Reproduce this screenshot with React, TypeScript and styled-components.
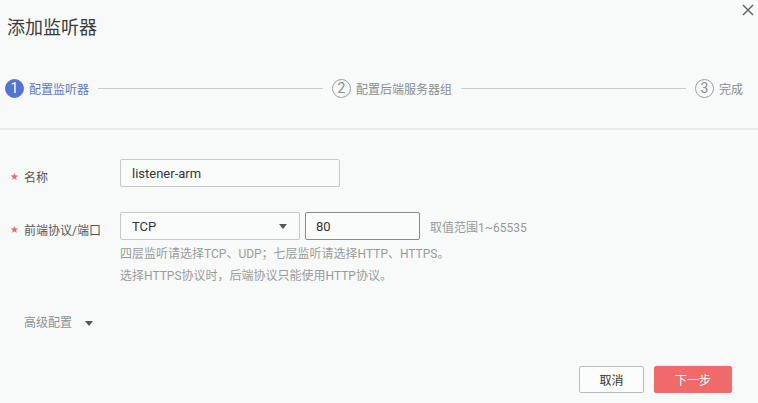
import * as React from 'react'
import styled, { createGlobalStyle } from 'styled-components'

const Global = createGlobalStyle`
  html, body {
    margin: 0;
    padding: 0;
    background: #f7faf8;
  }
  * {
    box-sizing: border-box;
  }
`

const Dialog = styled.div`
  position: relative;
  display: flex;
  flex-direction: column;
  width: 758px;
  height: 403px;
  background: #f7faf8;
  font-family: Roboto, "Noto Sans CJK SC", sans-serif;
  color: #333;
  overflow: hidden;
`

const Close = styled.button`
  position: absolute;
  top: 3px;
  right: 3px;
  width: 14px;
  height: 14px;
  padding: 0;
  border: 0;
  background: none;
  cursor: pointer;
`

const Header = styled.div`
  height: 130px;
  padding-top: 16px;
  border-bottom: 2px solid #e8ecea;
`

const Title = styled.h1`
  margin: 0 0 0 7px;
  font-size: 18px;
  line-height: 24px;
  font-weight: 400;
  color: #3a3a3a;
`

const Steps = styled.div`
  display: flex;
  align-items: center;
  height: 20px;
  margin-top: 38px;
  padding: 0 15px 0 5px;
`

const Step = styled.div`
  display: flex;
  align-items: center;
  gap: 5px;
  flex: none;
`

const StepNum = styled.span<{ $active?: boolean }>`
  display: flex;
  align-items: center;
  justify-content: center;
  width: 19px;
  height: 19px;
  border-radius: 50%;
  font-size: 14px;
  line-height: 1;
  background: ${p => (p.$active ? '#5273d3' : 'transparent')};
  border: 1px solid ${p => (p.$active ? '#5273d3' : '#9ea1a4')};
  color: ${p => (p.$active ? '#fff' : '#8a8d90')};
`

const StepLabel = styled.span<{ $active?: boolean }>`
  font-size: 12px;
  color: ${p => (p.$active ? '#5a78c9' : '#8a8d90')};
`

const StepLine = styled.div`
  flex: 1;
  height: 1px;
  margin: 0 9px;
  background: #c9cccd;
`

const Form = styled.div`
  padding: 29px 0 0 10px;
`

const Row = styled.div<{ $gap?: number }>`
  display: flex;
  align-items: center;
  margin-top: ${p => p.$gap || 0}px;
`

const Label = styled.label`
  display: flex;
  align-items: center;
  width: 110px;
  padding-top: 6px;
  font-size: 12px;
  color: #555;
`

const Star = styled.span`
  color: #e56b6b;
  font-family: "DejaVu Sans", sans-serif;
  font-size: 10px;
  width: 14px;
`

const Field = styled.div<{ $w: number; $dark?: boolean }>`
  display: flex;
  align-items: center;
  justify-content: space-between;
  width: ${p => p.$w}px;
  height: 28px;
  padding: 0 12px 0 11px;
  border: 1px solid ${p => (p.$dark ? '#868b90' : '#c5c9cc')};
  border-radius: 2px;
  background: #fafcfb;
  font-size: 13px;
  color: #333;
`

const PortField = styled(Field)`
  margin-left: 5px;
  padding-left: 10px;
`

const Caret = styled.span`
  width: 0;
  height: 0;
  border-left: 4px solid transparent;
  border-right: 4px solid transparent;
  border-top: 5px solid #555;
`

const Hint = styled.span`
  margin-left: 10px;
  font-size: 12px;
  color: #999;
`

const Help = styled.div`
  margin: 3px 0 0 110px;
  font-size: 12px;
  line-height: 22px;
  color: #9a9a9a;
`

const Advanced = styled.div`
  display: flex;
  align-items: center;
  gap: 13px;
  margin: 26px 0 0 14px;
  font-size: 12px;
  line-height: 20px;
  color: #8e9194;
`

const Footer = styled.div`
  display: flex;
  justify-content: flex-end;
  gap: 10px;
  margin-top: auto;
  padding: 0 26px 10px 0;
`

const Button = styled.button<{ $primary?: boolean }>`
  height: 27px;
  width: ${p => (p.$primary ? 78 : 65)}px;
  border-radius: 2px;
  font-family: inherit;
  font-size: 12px;
  border: 1px solid ${p => (p.$primary ? '#f06a6a' : '#b7bcc0')};
  background: ${p => (p.$primary ? '#f06a6a' : '#fbfcfc')};
  color: ${p => (p.$primary ? '#fff' : '#333')};
`

export default () => (
  <Dialog>
    <Global />
    <Close aria-label="close">
      <svg width="14" height="14" viewBox="0 0 14 14">
        <path d="M2 2 L12 12 M12 2 L2 12" stroke="#666" strokeWidth="1.5" />
      </svg>
    </Close>

    <Header>
      <Title>添加监听器</Title>
      <Steps>
        <Step>
          <StepNum $active>1</StepNum>
          <StepLabel $active>配置监听器</StepLabel>
        </Step>
        <StepLine />
        <Step>
          <StepNum>2</StepNum>
          <StepLabel>配置后端服务器组</StepLabel>
        </Step>
        <StepLine />
        <Step>
          <StepNum>3</StepNum>
          <StepLabel>完成</StepLabel>
        </Step>
      </Steps>
    </Header>

    <Form>
      <Row>
        <Label><Star>★</Star>名称</Label>
        <Field $w={220}>listener-arm</Field>
      </Row>
      <Row $gap={25}>
        <Label><Star>★</Star>前端协议/端口</Label>
        <Field $w={180}>TCP<Caret /></Field>
        <PortField $w={115} $dark>80</PortField>
        <Hint>取值范围1~65535</Hint>
      </Row>
      <Help>
        四层监听请选择TCP、UDP；七层监听请选择HTTP、HTTPS。<br />
        选择HTTPS协议时，后端协议只能使用HTTP协议。
      </Help>
      <Advanced>高级配置<Caret /></Advanced>
    </Form>

    <Footer>
      <Button>取消</Button>
      <Button $primary>下一步</Button>
    </Footer>
  </Dialog>
)
